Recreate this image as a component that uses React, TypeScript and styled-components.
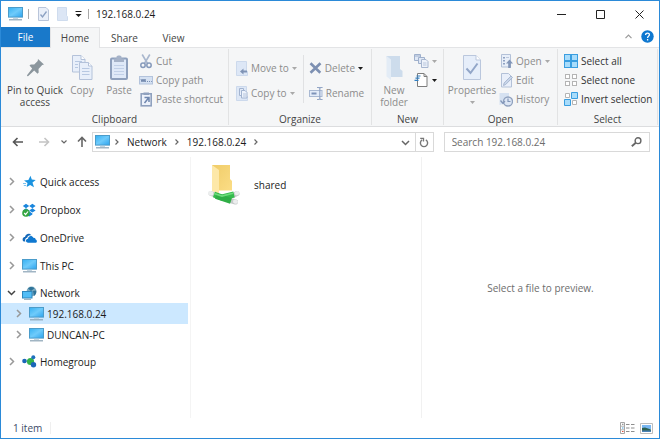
import React from "react";
import styled, { createGlobalStyle, css } from "styled-components";

const GlobalStyle = createGlobalStyle`
  *, *::before, *::after { box-sizing: border-box; }
  body { margin: 0; background: #fff; }
  body, button, input {
    font-family: "Open Sans", "Noto Sans", sans-serif;
    font-size: 10px;
    line-height: 12px;
    color: #1b1b1b;
  }
  button {
    padding: 0;
    border: 0;
    background: none;
  }
  svg { display: block; flex: none; }
`;

/* ---------- window frame ---------- */

const Window = styled.div`
  display: flex;
  flex-direction: column;
  min-height: 100vh;
  border: 1px solid #2b8ad8;
  background: #fff;
`;

const TitleBar = styled.header`
  display: flex;
  align-items: center;
  height: 26px;
  padding-left: 7px;
`;

const QuickTools = styled.div`
  display: flex;
  align-items: center;
  flex: none;
`;

const TitleDivider = styled.span<{ $before: number; $after: number }>`
  width: 1px;
  height: 10px;
  margin: 0 ${(p) => p.$after}px 0 ${(p) => p.$before}px;
  background: #a9a9a9;
`;

const QuickButton = styled.button<{ $gap: number }>`
  margin-right: ${(p) => p.$gap}px;
`;

const WindowTitle = styled.h1`
  flex: 1;
  margin: 0;
  font-size: 10px;
  font-weight: 400;
`;

const CaptionButton = styled.button`
  display: flex;
  align-items: center;
  justify-content: center;
  width: 39px;
  height: 26px;
`;

/* ---------- tabs ---------- */

const TabStrip = styled.nav`
  display: flex;
  height: 21px;
  padding-right: 2px;
  border-bottom: 1px solid #e3e4e6;
`;

const Tab = styled.button<{ $kind?: "file" | "active" }>`
  width: 49px;
  height: 21px;
  color: #444;
  ${(p) =>
    p.$kind === "file" &&
    css`
      height: 20px;
      background: #1979ca;
      color: #fff;
    `}
  ${(p) =>
    p.$kind === "active" &&
    css`
      width: 50px;
      border: 1px solid #e3e4e6;
      border-bottom: 0;
      background: #f5f6f7;
    `}
`;

const TabSpacer = styled.span`
  flex: 1;
`;

const TabTool = styled.button`
  display: flex;
  align-items: center;
  justify-content: center;
  width: 19px;
  height: 18px;
`;

/* ---------- ribbon ---------- */

const Ribbon = styled.div`
  display: grid;
  grid-template-columns: 228fr 143fr 72fr 114fr 100fr;
  height: 79px;
  padding: 1px 1px 1px 0;
  border-bottom: 1px solid #dcdddf;
  background: #f5f6f7;
`;

const Group = styled.section<{ $pad: number }>`
  display: flex;
  flex-direction: column;
  justify-content: space-between;
  min-width: 0;
  padding: 2px 0 0 ${(p) => p.$pad}px;
  border-right: 1px solid #e2e3e4;
`;

const GroupBody = styled.div`
  display: flex;
  height: 60px;
`;

const GroupLabel = styled.h2<{ $pad: number }>`
  margin: 0 0 0 -${(p) => p.$pad}px;
  font-size: 10px;
  font-weight: 400;
  line-height: 12px;
  text-align: center;
  color: #444;
`;

const BigButton = styled.button<{ $width: number }>`
  display: flex;
  flex-direction: column;
  align-items: center;
  width: ${(p) => p.$width}px;
  white-space: nowrap;
  color: #444;
  &:disabled { color: #8c8c8c; }
`;

const BigIcon = styled.span`
  display: flex;
  align-items: center;
  justify-content: center;
  height: 33px;
`;

const BigLine = styled.span`
  display: flex;
  align-items: center;
  justify-content: center;
  height: 12px;
`;

const Stack = styled.div<{ $gap: number; $top?: number; $left?: number }>`
  display: flex;
  flex-direction: column;
  gap: ${(p) => p.$gap}px;
  padding-top: ${(p) => p.$top ?? 2}px;
  margin-left: ${(p) => p.$left ?? 0}px;
`;

const SmallButton = styled.button`
  display: flex;
  align-items: center;
  gap: 3px;
  height: 16px;
  white-space: nowrap;
  color: #333;
  &:disabled, &[data-muted] { color: #8c8c8c; }
`;

const InnerDivider = styled.span`
  width: 1px;
  height: 48px;
  margin: 4px 0 0 6px;
  background: #e0e1e3;
`;

/* ---------- address row ---------- */

const AddressRow = styled.div`
  display: flex;
  align-items: center;
  height: 30px;
  padding: 0 9px 0 11px;
`;

const NavButton = styled.button<{ $width: number }>`
  display: flex;
  align-items: center;
  flex: none;
  width: ${(p) => p.$width}px;
  height: 20px;
`;

const AddressBox = styled.div`
  display: flex;
  align-items: center;
  flex: 341 1 341px;
  height: 20px;
  padding-left: 2px;
  border: 1px solid #d9d9d9;
`;

const BoxIcon = styled.span`
  margin-right: 4px;
`;

const Crumb = styled.button`
  margin: 0 7px;
`;

const AddressFill = styled.span`
  flex: 1;
`;

const BoxButton = styled.button<{ $divided?: boolean }>`
  display: flex;
  align-items: center;
  justify-content: center;
  width: 18px;
  height: 18px;
  border-left: ${(p) => (p.$divided ? "1px solid #d9d9d9" : "0")};
`;

const SearchBox = styled.label`
  display: flex;
  align-items: center;
  flex: 206 1 206px;
  min-width: 0;
  height: 20px;
  margin-left: 10px;
  padding: 0 7px;
  border: 1px solid #d9d9d9;
`;

const SearchInput = styled.input`
  flex: 1;
  min-width: 0;
  padding: 0;
  border: 0;
  outline: 0;
  background: none;
  &::placeholder { color: #6d6d6d; opacity: 1; }
`;

/* ---------- content ---------- */

const Content = styled.div`
  display: grid;
  grid-template-columns: 190fr 231fr 237fr;
  flex: 1;
`;

const Sidebar = styled.nav`
  padding: 14px 2px 0 0;
  border-right: 1px solid #f4f4f4;
`;

const Tree = styled.ul`
  display: flex;
  flex-direction: column;
  margin: 0;
  padding: 0;
  list-style: none;
`;

const TreeItem = styled.li<{ $gap?: number }>`
  margin-bottom: ${(p) => p.$gap ?? 7}px;
`;

const SubTree = styled.ul`
  margin: 0;
  padding: 0;
  list-style: none;
`;

const TreeLink = styled.a<{ $depth?: number; $selected?: boolean }>`
  display: flex;
  align-items: center;
  height: 21px;
  padding-left: ${(p) => 6 + (p.$depth ?? 0) * 7}px;
  background: ${(p) => (p.$selected ? "#cce8ff" : "transparent")};
  color: #1b1b1b;
  text-decoration: none;
`;

const TreeIcon = styled.span`
  display: flex;
  justify-content: center;
  width: 16px;
  margin: 0 3px 0 5px;
`;

const FilePane = styled.main`
  padding: 7px 0 0 15px;
  border-right: 1px solid #f1f1f1;
`;

const FileItem = styled.a`
  display: flex;
  align-items: center;
  gap: 13px;
  color: #1b1b1b;
  text-decoration: none;
`;

const PreviewPane = styled.aside`
  display: flex;
  align-items: center;
  justify-content: center;
  color: #6d6d6d;
`;

/* ---------- status bar ---------- */

const StatusBar = styled.footer`
  display: flex;
  align-items: center;
  height: 20px;
  padding: 0 6px 0 12px;
  color: #3c4a68;
`;

const StatusText = styled.span`
  padding-right: 8px;
  border-right: 1px solid #efefef;
`;

const StatusViews = styled.div`
  display: flex;
  align-items: center;
  gap: 5px;
  margin-left: auto;
`;

const ViewButton = styled.button`
  display: block;
`;

/* ---------- icons ---------- */

const Monitor = () => (
  <svg width="15" height="14" viewBox="0 0 15 14">
    <defs>
      <linearGradient id="screen" x1="0" y1="0" x2="1" y2="1">
        <stop offset="0" stopColor="#35b0f2" />
        <stop offset=".5" stopColor="#6fcbfb" />
        <stop offset="1" stopColor="#2ba3ee" />
      </linearGradient>
    </defs>
    <rect x=".5" y=".5" width="14" height="9.6" fill="url(#screen)" stroke="#4b9cca" />
    <path d="M5 10.800h5v1H5z" fill="#b7cbd8" />
    <path d="M1 12.200h13v1.200H1z" fill="#8aa3b5" />
  </svg>
);

const Caret = ({ dark = false }: { dark?: boolean }) => (
  <svg width="5" height="3" viewBox="0 0 5 3">
    <path d="M0 0h5L2.500 3z" fill={dark ? "#1b1b1b" : "#a9a9a9"} />
  </svg>
);

const DocCheck = () => (
  <svg width="11" height="14" viewBox="0 0 11 14">
    <path d="M.5.5h7.500l2.500 2.500v10.500H.5z" fill="#e9eff9" stroke="#b9c5da" />
    <path d="M2.500 7.500l2 2.500 4-5.500" fill="none" stroke="#8ba0c2" strokeWidth="1.300" />
  </svg>
);

const DocFolder = () => (
  <svg width="11" height="14" viewBox="0 0 11 14">
    <path d="M.5.5h9v8l1 1v4H.5z" fill="#dce6f5" stroke="#cfdcee" />
  </svg>
);

const QuickMenu = () => (
  <svg width="7" height="7" viewBox="0 0 7 7">
    <path d="M.5 0h6v1h-6zM.5 3h6l-3 3z" fill="#1b1b1b" />
  </svg>
);

const Minimize = () => (
  <svg width="9" height="9" viewBox="0 0 9 9"><path d="M0 4.500h9" stroke="#222" /></svg>
);
const Maximize = () => (
  <svg width="9" height="9" viewBox="0 0 9 9"><path d="M.5.5h8v8h-8z" fill="none" stroke="#222" /></svg>
);
const Close = () => (
  <svg width="9" height="9" viewBox="0 0 9 9"><path d="M.5.5l8 8M8.500.5l-8 8" stroke="#222" /></svg>
);

const CollapseRibbon = () => (
  <svg width="7" height="5" viewBox="0 0 7 5">
    <path d="M.5 4.200l3-3 3 3" fill="none" stroke="#9a9a9a" strokeWidth="1.200" />
  </svg>
);

const Help = () => (
  <svg width="13" height="13" viewBox="0 0 13 13">
    <circle cx="6.500" cy="6.500" r="6.200" fill="#0f78d0" />
    <path d="M4.600 5c0-2.600 3.900-2.400 3.800-.2 0 1.300-1.800 1.400-1.800 3.100M6.600 9v1.400" fill="none" stroke="#fff" strokeWidth="1.300" />
  </svg>
);

const Pin = () => (
  <svg width="19" height="19" viewBox="0 0 19 19">
    <path d="M12 1l6 5.500-1.800.5-3.700 4 .2 3.500-1.200 1.200-3.300-3.200L2 18.200 1 18l.2-1 5-6.500L3.500 7.600l1.300-1.200 3.400.2 3.500-3.700z" fill="#8b969d" />
  </svg>
);

const CopyBig = () => (
  <svg width="21" height="25" viewBox="0 0 21 25">
    <g fill="#e8effa" stroke="#b4c2da">
      <path d="M.5.5h8.500l4 4v12.500H.5z" />
      <path d="M7.500 7.500h9l3.500 3.500v13.500H7.500z" />
    </g>
    <path d="M9 .5v4h4M16.500 7.500v3.500H20" fill="#fff" stroke="#b4c2da" />
    <path d="M3 6.500h7M3 9.500h3M3 12.500h3M10 13.500h7.500M10 16.500h7.500M10 19.500h7.500" stroke="#b7c8e2" />
  </svg>
);

const PasteBig = () => (
  <svg width="18" height="25" viewBox="0 0 18 25">
    <rect x="1" y="3.500" width="16" height="20.500" rx="1" fill="#dfe9f8" stroke="#8ea0bd" strokeWidth="2" />
    <path d="M4 7V3.500h2.500V2c0-1 1-1.500 2.500-1.500s2.500.5 2.500 1.500v1.500H14V7z" fill="#a5b2c8" />
    <path d="M4 10.500h10M4 13.500h10M4 16.500h10M4 19.500h10" stroke="#c1d0e8" />
  </svg>
);

const Cut = () => (
  <svg width="14" height="15" viewBox="0 0 14 15">
    <path d="M3.200.5l5.300 9M10.800.5L5.500 9.500" stroke="#a9b7ce" strokeWidth="1.600" />
    <circle cx="4" cy="11.300" r="2.200" fill="none" stroke="#8599ba" strokeWidth="1.500" />
    <circle cx="10" cy="11.300" r="2.200" fill="none" stroke="#8599ba" strokeWidth="1.500" />
  </svg>
);

const CopyPath = () => (
  <svg width="14" height="9" viewBox="0 0 14 9">
    <rect x=".5" y=".5" width="13" height="7.500" fill="#d5e1f2" stroke="#b3c3dc" />
    <path d="M2 3l1 3 1-3 1 3 1-3 .5 3M8 5.500h1M10 5.500h1M12 5.500h.8" fill="none" stroke="#768cb0" />
  </svg>
);

const PasteShortcut = () => (
  <svg width="14" height="15" viewBox="0 0 14 15">
    <rect x="2.200" y="1.800" width="10" height="12" fill="#edf2fb" stroke="#8fa1be" strokeWidth="1.600" />
    <path d="M4.500.5h5.500v2.500H4.500z" fill="#8fa1be" />
    <path d="M5.500 5.500h4.500v4.500M9.500 6l-4 5" fill="none" stroke="#6e86ae" strokeWidth="1.500" />
  </svg>
);

const MoveTo = () => (
  <svg width="12" height="15" viewBox="0 0 12 15">
    <path d="M.5.5h10v9l1 1v4H.5z" fill="#dde7f6" stroke="#ccd9ec" />
    <path d="M4 10.500l3.500-3v2H11v2H7.500v2z" fill="#7f93b5" />
  </svg>
);

const CopyTo = () => (
  <svg width="12" height="15" viewBox="0 0 12 15">
    <path d="M.5.5h10v9l1 1v4H.5z" fill="#dde7f6" stroke="#ccd9ec" />
    <path d="M3.500 2.500h4v1.500M3.500 2.500v7h2M5.500 4.500h3.500l2 2v5.500H5.500z" fill="#edf3fc" stroke="#a3b4d0" />
    <path d="M7 8h3M7 10h3" stroke="#b6c4dc" />
  </svg>
);

const Delete = () => (
  <svg width="13" height="12" viewBox="0 0 13 12">
    <path d="M1.500 1.200l9.800 9.600M11.500 1.200L1.500 10.800" stroke="#7d90b2" strokeWidth="2.600" />
  </svg>
);

const Rename = () => (
  <svg width="14" height="13" viewBox="0 0 14 13">
    <rect x=".5" y="3.500" width="12.500" height="6" fill="#e3ecf9" stroke="#a9b9d3" />
    <path d="M2.500 5.500h5v2h-5z" fill="#7d93b8" />
    <path d="M8 .5h2l.8.8.8-.8h2M8 12.500h2l.8-.8.8.8h2M10.800 1v11" fill="none" stroke="#93a6c6" strokeWidth="1.200" />
  </svg>
);

const NewFolder = () => (
  <svg width="17" height="24" viewBox="0 0 17 24">
    <path d="M.5 0H14v13l2.500 2v6H4z" fill="#cddcec" />
    <path d="M.5 0L5 3.500V24L.5 20.500z" fill="#e3ecf6" />
  </svg>
);

const NewItem = () => (
  <svg width="15" height="14" viewBox="0 0 15 14">
    <path d="M.5.5h6v6h-6z" fill="#dfe8f6" stroke="#9fb0cc" />
    <path d="M.5 2h6" stroke="#9fb0cc" />
    <path d="M4.500 3.500h6v6h-6z" fill="#dfe8f6" stroke="#9fb0cc" />
    <path d="M7.500 5.500h4.500l2 2v6H7.500z" fill="#edf2fa" stroke="#a7b6cf" />
    <path d="M9 9h3.500M9 11h3.500" stroke="#b9c6dc" />
  </svg>
);

const EasyAccess = () => (
  <svg width="15" height="14" viewBox="0 0 15 14">
    <path d="M3.500.5H10l3 3v10H3.500z" fill="#fff" stroke="#7d7d7d" />
    <path d="M10 .5v3h3" fill="none" stroke="#7d7d7d" />
    <path d="M2.500 3h4M1.500 5.200h4M.5 7.400h4" stroke="#2f7fc4" strokeWidth="1.200" />
  </svg>
);

const PropertiesBig = () => (
  <svg width="18" height="25" viewBox="0 0 18 25">
    <path d="M.5.5h12.500l4.500 4.500v19.500H.5z" fill="#e6eefa" stroke="#bac7dd" />
    <path d="M13 .5V5h4.500" fill="#fff" stroke="#bac7dd" />
    <path d="M3.500 13.500l4 4.500 7-9.500" fill="none" stroke="#92a6c8" strokeWidth="2" />
  </svg>
);

const OpenIcon = () => (
  <svg width="14" height="15" viewBox="0 0 14 15">
    <path d="M2.500.5h9v12.500h-9z" fill="#e8eff9" stroke="#b3c1d8" />
    <path d="M4 3h2v1.500H4zM4 6h2v1.500H4zM4 9h2v1.500H4zM7 3.500h3V4H7z" fill="#8fa2c2" />
    <path d="M10.500 5.500l3.500 4h-2.200V14H9.200V9.500H7z" fill="#8296b8" />
  </svg>
);

const EditIcon = () => (
  <svg width="14" height="15" viewBox="0 0 14 15">
    <path d="M2.500.5h7l3 3v10.500h-10z" fill="#e9effa" stroke="#b3c1d8" />
    <path d="M4.500 12.500l.6-2.500L12 3l1.500 1.500-6.800 7z" fill="#c9d6ea" stroke="#9cadc9" strokeWidth=".8" />
  </svg>
);

const HistoryIcon = () => (
  <svg width="14" height="15" viewBox="0 0 14 15">
    <path d="M.5 1h9.500v9l-9.500 3z" fill="#d5e1f1" />
    <circle cx="9" cy="9.500" r="4.500" fill="#dbe5f4" stroke="#8fa1be" strokeWidth="1.300" />
    <path d="M9 6.500v3h2.500M1.500 8.500l2.500 3 2-2.500" fill="none" stroke="#8296b8" strokeWidth="1.200" />
  </svg>
);

const cells: [number, number][] = [[0, 0], [7, 0], [0, 7], [7, 7]];

const SelectAll = () => (
  <svg width="14" height="14" viewBox="0 0 14 14">
    {cells.map(([x, y]) => (
      <rect key={`${x}-${y}`} x={x + 0.5} y={y + 0.5} width="6" height="6" fill="#a8dcfb" stroke="#3a9ee0" />
    ))}
  </svg>
);

const SelectNone = () => (
  <svg width="14" height="14" viewBox="0 0 14 14">
    {cells.map(([x, y]) => (
      <rect key={`${x}-${y}`} x={x + 1.5} y={y + 1.5} width="4" height="4" fill="#fff" stroke="#b4b4b4" />
    ))}
  </svg>
);

const InvertSelection = () => (
  <svg width="14" height="14" viewBox="0 0 14 14">
    <path d="M1.500 1.500h4v4h-4zM8.500 8.500h4v4h-4z" fill="#fff" stroke="#b4b4b4" />
    <path d="M7.500.5h6v6h-6zM.5 7.500h6v6h-6z" fill="#a8dcfb" stroke="#3a9ee0" />
  </svg>
);

const Arrow = ({ dir, color }: { dir: "left" | "right" | "up"; color: string }) => {
  const d = {
    left: "M11 6H1.500M5.500 2l-4 4 4 4",
    right: "M1 6h9.500M6.500 2l4 4-4 4",
    up: "M6 11V1.500M2 5.500l4-4 4 4",
  }[dir];
  return (
    <svg width="12" height="12" viewBox="0 0 12 12">
      <path d={d} fill="none" stroke={color} strokeWidth="1.600" />
    </svg>
  );
};

const Chevron = ({ open = false, color = "#8f8f8f" }: { open?: boolean; color?: string }) => (
  <svg width="9" height="9" viewBox="0 0 9 9">
    <path d={open ? "M1 3l3.500 3.500L8 3" : "M3 1l3.500 3.500L3 8"} fill="none" stroke={color} strokeWidth="1.500" />
  </svg>
);

const CrumbChevron = ({ open = false }: { open?: boolean }) => (
  <svg width="6" height="6" viewBox="0 0 6 6">
    <path d={open ? "M.5 1.500L3 4l2.500-2.500" : "M1.500.5L4 3 1.500 5.500"} fill="none" stroke="#666" strokeWidth="1.200" />
  </svg>
);

const Refresh = () => (
  <svg width="10" height="11" viewBox="0 0 10 11">
    <path d="M6.800 2.900a3.600 3.600 0 1 1-3.600 0" fill="none" stroke="#777" strokeWidth="1.400" />
    <path d="M1.200 1.300h3.300v3.300" fill="none" stroke="#777" strokeWidth="1.300" />
  </svg>
);

const Magnifier = () => (
  <svg width="11" height="10" viewBox="0 0 11 10">
    <circle cx="7" cy="3.700" r="2.900" fill="none" stroke="#666" strokeWidth="1.400" />
    <path d="M4.800 5.800L.8 9.300" stroke="#666" strokeWidth="1.800" />
  </svg>
);

const Star = () => (
  <svg width="13" height="13" viewBox="0 0 13 13">
    <path d="M7.500.8l1.300 3.800 3.900.3-3.200 2.500 1.500 4.800-3.900-2.300L3.700 12l.8-4L1 5.500l4.400-.6z" fill="#1b93e0" />
    <path d="M0 8.500h3M.8 10.500h2.500" stroke="#7fc4ef" />
  </svg>
);

const Dropbox = () => (
  <svg width="14" height="14" viewBox="0 0 14 14">
    <path d="M4 .8L7.200 3 4 5.200.8 3zM10.400.8L13.600 3l-3.200 2.200L7.200 3zM4 5.200l3.200 2.200L4 9.600.8 7.400zM10.400 5.200l3.200 2.200-3.200 2.200-3.200-2.200zM7.200 8.300l3.200 2.100v1.200l-3.200 2-2-1.200z" fill="#1a86dd" />
    <circle cx="4" cy="10" r="3.800" fill="#35a541" />
    <path d="M2.200 10l1.400 1.500L6 8.500" fill="none" stroke="#fff" strokeWidth="1.200" />
  </svg>
);

const OneDrive = () => (
  <svg width="15" height="10" viewBox="0 0 15 10">
    <path d="M.8 7.500C0 4.800 2 4 3 4 3.300 1 7.500-.8 9.500 2.300 7 1.700 5.500 3 5.200 4.700 3 5 2.800 7.500 3.400 8.500 2 8.800 1 8.300.8 7.500z" fill="#1468b8" />
    <path d="M6.200 9.800C3 9.500 3.500 5.700 6 5.700 6.300 2.500 10.400 2.300 11.300 4.800c2.200-.2 2.300 1.300 2.300 1.700 2 .6 1.600 3.300-.4 3.300z" fill="#0f78d0" />
  </svg>
);

const NetworkIcon = () => (
  <svg width="15" height="14" viewBox="0 0 15 14">
    <circle cx="9.500" cy="5.500" r="4.900" fill="#7ba9bf" />
    <path d="M6 2.500c2-2 4-2 6.500-.3L9 5zM11 5l3.200-.5c.5 3-1 4.500-2.200 5.500z" fill="#2f7399" />
    <rect x=".5" y="5.500" width="9.500" height="6.500" fill="#52bdf6" stroke="#2e87bd" />
    <path d="M2 13.300h7" stroke="#8aa3b5" />
  </svg>
);

const Homegroup = () => (
  <svg width="15" height="13" viewBox="0 0 15 13">
    <path d="M3 6l5 .5L11 2M8 7l3 3" fill="none" stroke="#9fd5a4" strokeWidth="1" />
    <circle cx="2.500" cy="6" r="2.300" fill="#1b66b8" />
    <circle cx="8.500" cy="6.500" r="3.600" fill="#34b24a" />
    <circle cx="11.300" cy="2.300" r="2" fill="#1f70bd" />
    <circle cx="11.500" cy="9.700" r="2.700" fill="#1b66b8" />
  </svg>
);

const SharedFolder = () => (
  <svg width="35" height="42" viewBox="0 0 35 42">
    <defs>
      <linearGradient id="folderBack" x1="0" y1="0" x2="1" y2="1">
        <stop offset="0" stopColor="#f0cc68" />
        <stop offset="1" stopColor="#fbdd86" />
      </linearGradient>
    </defs>
    <path d="M6 1h18v14l2 2v9.500H6z" fill="url(#folderBack)" />
    <path d="M6 1l7 5v24L6 27z" fill="#fde8a8" />
    <g strokeLinecap="round">
      <path d="M5 29.500l4 1.500M28 31l3-1.500M26 37l3.500 1" stroke="#c6caca" strokeWidth="5" />
      <path d="M4 29l1.500.5M30.500 29.300l1-.3M29 37.500l1 .3" stroke="#eceeee" strokeWidth="4" />
    </g>
    <path d="M8 30.500l8 3 12-3" fill="none" stroke="#35bb4d" strokeWidth="6" />
    <path d="M10 32l15 5" stroke="#2fae46" strokeWidth="6" />
    <path d="M8 29.500l8 2.600 11-2.800" fill="none" stroke="#6ddb7c" strokeWidth="1.600" />
  </svg>
);

const DetailsView = () => (
  <svg width="15" height="12" viewBox="0 0 15 12">
    <path d="M.5.5h4v11h-4z" fill="#fff" stroke="#a5a5a5" />
    <path d="M.5 4.200h4M.5 7.800h4" stroke="#b5b5b5" />
    <path d="M2 1.800h1.500v1H2z" fill="#777" />
    <path d="M2 5.500h1.500v1H2z" fill="#3b9de0" />
    <path d="M2 9h1.500v1H2z" fill="#e34b3b" />
    <path d="M6 2.500h3.500M11 2.500h3.500M6 6h3.500M11 6h3.500M6 9.500h3.500M11 9.500h3.500" stroke="#8e8e8e" />
  </svg>
);

const ThumbnailView = () => (
  <svg width="13" height="11" viewBox="0 0 13 11">
    <path d="M.5.5h12v10H.5z" fill="#fff" stroke="#bdbdbd" />
    <path d="M2 2h9v4H2z" fill="#79b7f2" />
    <path d="M2 5l3-.5 6 2V9H2z" fill="#2c6152" />
    <path d="M2 7.500h9V9H2z" fill="#4b83b8" />
  </svg>
);

/* ---------- pieces ---------- */

type GroupProps = { label: string; pad: number; children: React.ReactNode };

const RibbonGroup = ({ label, pad, children }: GroupProps) => (
  <Group $pad={pad} aria-label={label}>
    <GroupBody>{children}</GroupBody>
    <GroupLabel $pad={pad}>{label}</GroupLabel>
  </Group>
);

type BigActionProps = {
  icon: React.ReactNode;
  lines: React.ReactNode[];
  width: number;
  disabled?: boolean;
};

const BigAction = ({ icon, lines, width, disabled }: BigActionProps) => (
  <BigButton $width={width} disabled={disabled}>
    <BigIcon>{icon}</BigIcon>
    {lines.map((line, i) => (
      <BigLine key={i}>{line}</BigLine>
    ))}
  </BigButton>
);

type TreeRowProps = {
  icon: React.ReactNode;
  label: string;
  depth?: number;
  selected?: boolean;
  open?: boolean;
};

const TreeRow = ({ icon, label, depth, selected, open }: TreeRowProps) => (
  <TreeLink href="#" $depth={depth} $selected={selected} aria-current={selected ? "page" : undefined}>
    <Chevron open={open} color={open ? "#444" : "#999"} />
    <TreeIcon>{icon}</TreeIcon>
    {label}
  </TreeLink>
);

export default function App() {
  return (
    <>
      <GlobalStyle />
      <Window>
        <TitleBar>
          <QuickTools>
            <Monitor />
            <TitleDivider $before={5} $after={9} />
            <QuickButton $gap={8} aria-label="Properties"><DocCheck /></QuickButton>
            <QuickButton $gap={7} aria-label="New folder"><DocFolder /></QuickButton>
            <QuickButton $gap={0} aria-label="Customize toolbar"><QuickMenu /></QuickButton>
            <TitleDivider $before={6} $after={7} />
          </QuickTools>
          <WindowTitle>192.168.0.24</WindowTitle>
          <CaptionButton aria-label="Minimize"><Minimize /></CaptionButton>
          <CaptionButton aria-label="Maximize"><Maximize /></CaptionButton>
          <CaptionButton aria-label="Close"><Close /></CaptionButton>
        </TitleBar>

        <TabStrip>
          <Tab $kind="file">File</Tab>
          <Tab $kind="active">Home</Tab>
          <Tab>Share</Tab>
          <Tab>View</Tab>
          <TabSpacer />
          <TabTool aria-label="Collapse ribbon"><CollapseRibbon /></TabTool>
          <TabTool aria-label="Help"><Help /></TabTool>
        </TabStrip>

        <Ribbon>
          <RibbonGroup label="Clipboard" pad={6}>
            <BigAction width={56} icon={<Pin />} lines={["Pin to Quick", "access"]} />
            <BigAction width={38} icon={<CopyBig />} lines={["Copy"]} disabled />
            <BigAction width={36} icon={<PasteBig />} lines={["Paste"]} disabled />
            <Stack $gap={3} $left={2}>
              <SmallButton disabled><Cut />Cut</SmallButton>
              <SmallButton disabled><CopyPath />Copy path</SmallButton>
              <SmallButton disabled><PasteShortcut />Paste shortcut</SmallButton>
            </Stack>
          </RibbonGroup>

          <RibbonGroup label="Organize" pad={7}>
            <Stack $gap={9} $top={9}>
              <SmallButton disabled><MoveTo />Move to<Caret /></SmallButton>
              <SmallButton disabled><CopyTo />Copy to<Caret /></SmallButton>
            </Stack>
            <InnerDivider />
            <Stack $gap={9} $top={9} $left={5}>
              <SmallButton data-muted=""><Delete />Delete<Caret dark /></SmallButton>
              <SmallButton disabled><Rename />Rename</SmallButton>
            </Stack>
          </RibbonGroup>

          <RibbonGroup label="New" pad={4}>
            <BigAction width={36} icon={<NewFolder />} lines={["New", "folder"]} disabled />
            <Stack $gap={3} $left={2}>
              <SmallButton disabled aria-label="New item"><NewItem /><Caret /></SmallButton>
              <SmallButton aria-label="Easy access"><EasyAccess /><Caret dark /></SmallButton>
            </Stack>
          </RibbonGroup>

          <RibbonGroup label="Open" pad={3}>
            <BigAction width={50} icon={<PropertiesBig />} lines={["Properties", <Caret key="caret" />]} disabled />
            <Stack $gap={3} $left={2}>
              <SmallButton disabled><OpenIcon />Open<Caret /></SmallButton>
              <SmallButton disabled><EditIcon />Edit</SmallButton>
              <SmallButton disabled><HistoryIcon />History</SmallButton>
            </Stack>
          </RibbonGroup>

          <RibbonGroup label="Select" pad={6}>
            <Stack $gap={3}>
              <SmallButton><SelectAll />Select all</SmallButton>
              <SmallButton><SelectNone />Select none</SmallButton>
              <SmallButton><InvertSelection />Invert selection</SmallButton>
            </Stack>
          </RibbonGroup>
        </Ribbon>

        <AddressRow>
          <NavButton $width={26} aria-label="Back"><Arrow dir="left" color="#555" /></NavButton>
          <NavButton $width={23} aria-label="Forward"><Arrow dir="right" color="#c4c4c4" /></NavButton>
          <NavButton $width={15} aria-label="Recent locations"><CrumbChevron open /></NavButton>
          <NavButton $width={16} aria-label="Up"><Arrow dir="up" color="#666" /></NavButton>
          <AddressBox>
            <BoxIcon><Monitor /></BoxIcon>
            <CrumbChevron />
            <Crumb>Network</Crumb>
            <CrumbChevron />
            <Crumb>192.168.0.24</Crumb>
            <CrumbChevron />
            <AddressFill />
            <BoxButton aria-label="Previous locations"><Chevron open color="#666" /></BoxButton>
            <BoxButton $divided aria-label="Refresh"><Refresh /></BoxButton>
          </AddressBox>
          <SearchBox>
            <SearchInput type="text" aria-label="Search 192.168.0.24" placeholder="Search 192.168.0.24" />
            <Magnifier />
          </SearchBox>
        </AddressRow>

        <Content>
          <Sidebar aria-label="Folders">
            <Tree>
              <TreeItem><TreeRow icon={<Star />} label="Quick access" /></TreeItem>
              <TreeItem><TreeRow icon={<Dropbox />} label="Dropbox" /></TreeItem>
              <TreeItem><TreeRow icon={<OneDrive />} label="OneDrive" /></TreeItem>
              <TreeItem $gap={6}><TreeRow icon={<Monitor />} label="This PC" /></TreeItem>
              <TreeItem $gap={6}>
                <TreeRow icon={<NetworkIcon />} label="Network" open />
                <SubTree>
                  <li><TreeRow icon={<Monitor />} label="192.168.0.24" depth={1} selected /></li>
                  <li><TreeRow icon={<Monitor />} label="DUNCAN-PC" depth={1} /></li>
                </SubTree>
              </TreeItem>
              <TreeItem><TreeRow icon={<Homegroup />} label="Homegroup" /></TreeItem>
            </Tree>
          </Sidebar>
          <FilePane>
            <FileItem href="#"><SharedFolder />shared</FileItem>
          </FilePane>
          <PreviewPane>Select a file to preview.</PreviewPane>
        </Content>

        <StatusBar>
          <StatusText>1 item</StatusText>
          <StatusViews>
            <ViewButton aria-label="Details view"><DetailsView /></ViewButton>
            <ViewButton aria-label="Thumbnail view"><ThumbnailView /></ViewButton>
          </StatusViews>
        </StatusBar>
      </Window>
    </>
  );
}
